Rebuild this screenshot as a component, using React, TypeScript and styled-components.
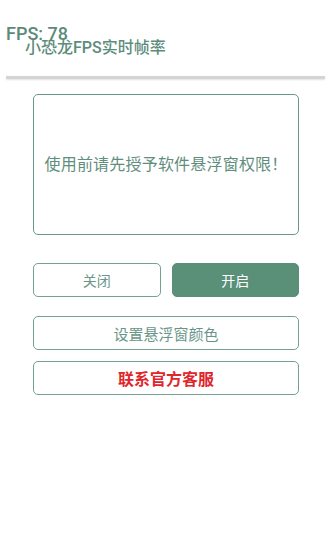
import styled, { createGlobalStyle } from 'styled-components';

const GlobalStyle = createGlobalStyle`
  html, body {
    margin: 0;
    padding: 0;
    background: #ffffff;
  }
  body {
    font-family: Roboto, "Noto Sans CJK SC", sans-serif;
  }
`;

const App = () => {
  return (
    <Page>
      <GlobalStyle />
      <FpsBadge>FPS: 78</FpsBadge>
      <Header>
        <Title>小恐龙FPS实时帧率</Title>
      </Header>
      <Divider />

      <Content>
        <NoticeBox>使用前请先授予软件悬浮窗权限！</NoticeBox>

        <ButtonRow>
          <ActionButton>关闭</ActionButton>
          <ActionButton $filled>开启</ActionButton>
        </ButtonRow>

        <WideButton $gap={19}>设置悬浮窗颜色</WideButton>
        <WideButton $gap={11} $danger>联系官方客服</WideButton>
      </Content>
    </Page>
  );
};

export default App;

// Styled Components
const Page = styled.div`
  position: relative;
  min-height: 537px;
  background: #ffffff;
`;

const FpsBadge = styled.div`
  position: absolute;
  left: 6px;
  top: 24px;
  font-family: Roboto, sans-serif;
  font-size: 18px;
  font-weight: 500;
  line-height: 20px;
  color: #5b8a79;
`;

const Header = styled.div`
  padding: 38px 0 0 25px;
  height: 38px;
`;

const Title = styled.h1`
  margin: 0;
  font-size: 16px;
  font-weight: 500;
  line-height: 20px;
  color: #5d8c7b;
`;

const Divider = styled.div`
  height: 3px;
  margin: 0 4px 0 6px;
  background: #d4d4d4;
  box-shadow: 0 1px 2px rgba(0, 0, 0, 0.12);
`;

const Content = styled.div`
  display: flex;
  flex-direction: column;
  padding: 15px 30px 0 33px;
`;

const NoticeBox = styled.div`
  height: 141px;
  box-sizing: border-box;
  border: 1.5px solid #6a9888;
  border-radius: 5px;
  display: flex;
  align-items: center;
  justify-content: center;
  padding-bottom: 4px;
  font-size: 16px;
  color: #5f8e7d;
  letter-spacing: 0.2px;
`;

const ButtonRow = styled.div`
  display: grid;
  grid-template-columns: 1fr 1fr;
  gap: 11px;
  margin-top: 28px;
`;

const ActionButton = styled.div<{ $filled?: boolean }>`
  height: 34px;
  box-sizing: border-box;
  border: 1.5px solid ${p => (p.$filled ? '#5a8f78' : '#74a191')};
  border-radius: 5px;
  background: ${p => (p.$filled ? '#5a8f78' : '#ffffff')};
  color: ${p => (p.$filled ? '#ffffff' : '#6a968a')};
  display: flex;
  align-items: center;
  justify-content: center;
  font-size: 14px;
`;

const WideButton = styled.div<{ $gap: number; $danger?: boolean }>`
  height: 34px;
  margin-top: ${p => p.$gap}px;
  box-sizing: border-box;
  border: 1.5px solid #74a191;
  border-radius: 5px;
  display: flex;
  align-items: center;
  justify-content: center;
  font-size: ${p => (p.$danger ? 16 : 15)}px;
  font-weight: ${p => (p.$danger ? 700 : 400)};
  color: ${p => (p.$danger ? '#e0262a' : '#6a968a')};
`;
